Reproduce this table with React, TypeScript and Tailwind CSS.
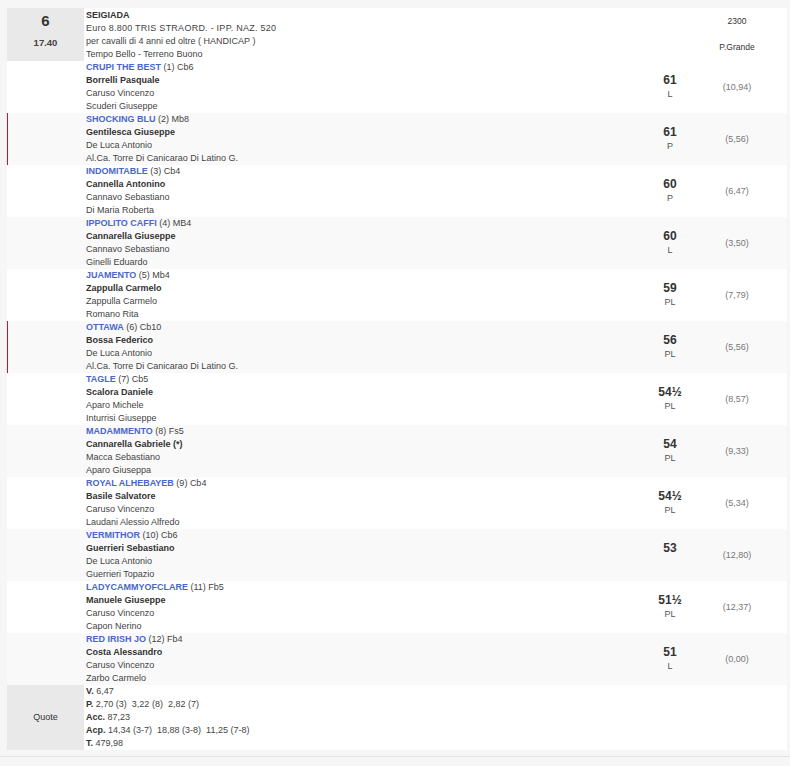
import React from "react";

type Horse = {
  name: string;
  num: number;
  code: string;
  jockey: string;
  trainer: string;
  owner: string;
  weight: string;
  tag: string;
  odds: string;
  red?: boolean;
};

const horses: Horse[] = [
  { name: "CRUPI THE BEST", num: 1, code: "Cb6", jockey: "Borrelli Pasquale", trainer: "Caruso Vincenzo", owner: "Scuderi Giuseppe", weight: "61", tag: "L", odds: "(10,94)" },
  { name: "SHOCKING BLU", num: 2, code: "Mb8", jockey: "Gentilesca Giuseppe", trainer: "De Luca Antonio", owner: "Al.Ca. Torre Di Canicarao Di Latino G.", weight: "61", tag: "P", odds: "(5,56)", red: true },
  { name: "INDOMITABLE", num: 3, code: "Cb4", jockey: "Cannella Antonino", trainer: "Cannavo Sebastiano", owner: "Di Maria Roberta", weight: "60", tag: "P", odds: "(6,47)" },
  { name: "IPPOLITO CAFFI", num: 4, code: "MB4", jockey: "Cannarella Giuseppe", trainer: "Cannavo Sebastiano", owner: "Ginelli Eduardo", weight: "60", tag: "L", odds: "(3,50)" },
  { name: "JUAMENTO", num: 5, code: "Mb4", jockey: "Zappulla Carmelo", trainer: "Zappulla Carmelo", owner: "Romano Rita", weight: "59", tag: "PL", odds: "(7,79)" },
  { name: "OTTAWA", num: 6, code: "Cb10", jockey: "Bossa Federico", trainer: "De Luca Antonio", owner: "Al.Ca. Torre Di Canicarao Di Latino G.", weight: "56", tag: "PL", odds: "(5,56)", red: true },
  { name: "TAGLE", num: 7, code: "Cb5", jockey: "Scalora Daniele", trainer: "Aparo Michele", owner: "Inturrisi Giuseppe", weight: "54½", tag: "PL", odds: "(8,57)" },
  { name: "MADAMMENTO", num: 8, code: "Fs5", jockey: "Cannarella Gabriele (*)", trainer: "Macca Sebastiano", owner: "Aparo Giuseppa", weight: "54", tag: "PL", odds: "(9,33)" },
  { name: "ROYAL ALHEBAYEB", num: 9, code: "Cb4", jockey: "Basile Salvatore", trainer: "Caruso Vincenzo", owner: "Laudani Alessio Alfredo", weight: "54½", tag: "PL", odds: "(5,34)" },
  { name: "VERMITHOR", num: 10, code: "Cb6", jockey: "Guerrieri Sebastiano", trainer: "De Luca Antonio", owner: "Guerrieri Topazio", weight: "53", tag: "", odds: "(12,80)" },
  { name: "LADYCAMMYOFCLARE", num: 11, code: "Fb5", jockey: "Manuele Giuseppe", trainer: "Caruso Vincenzo", owner: "Capon Nerino", weight: "51½", tag: "PL", odds: "(12,37)" },
  { name: "RED IRISH JO", num: 12, code: "Fb4", jockey: "Costa Alessandro", trainer: "Caruso Vincenzo", owner: "Zarbo Carmelo", weight: "51", tag: "L", odds: "(0,00)" },
];

export default function App() {
  return (
    <div
      className="min-h-[766px] w-[790px] bg-[#f6f6f6] pt-[8px] text-[9px] leading-[13px] text-[#444]"
      style={{ fontFamily: '"Liberation Sans", Arial, sans-serif' }}
    >
      <div className="ml-[7px] w-[780px] bg-white">
        {/* Header */}
        <div className="flex h-[53px]">
          <div className="flex w-[77px] flex-col items-center bg-[#e9e9e9]">
            <div className="mt-[4px] text-[15px] font-bold leading-[18px] text-[#333]">6</div>
            <div className="mt-[6px] text-[9.5px] font-bold text-[#444]">17.40</div>
          </div>
          <div className="flex-1 pl-[2px] pt-px">
            <div className="font-bold text-[#333]">SEIGIADA</div>
            <div className="tracking-[0.25px]">Euro 8.800 TRIS STRAORD. - IPP. NAZ. 520</div>
            <div>per cavalli di 4 anni ed oltre ( HANDICAP )</div>
            <div>Tempo Bello - Terreno Buono</div>
          </div>
          <div className="w-[60px]" />
          <div className="flex w-[74px] flex-col items-center pt-[7px] text-[#333]">
            <div className="text-[8.5px]">2300</div>
            <div className="mt-[13px] text-[8.5px]">P.Grande</div>
          </div>
          <div className="w-[13px]" />
        </div>

        {horses.map((h, i) => (
          <div
            key={h.num}
            className={"flex h-[52px] " + (i % 2 === 1 ? "bg-[#f9f9f9]" : "bg-white")}
          >
            <div className={h.red ? "w-px bg-[#d0101e]" : "w-px"} />
            <div className="w-[76px]" />
            <div className="flex-1 pl-[2px]">
              <div>
                <span className="font-bold text-[#4a66cc]">{h.name}</span>
                <span> ({h.num}) {h.code}</span>
              </div>
              <div className="font-bold text-[#333]">{h.jockey}</div>
              <div>{h.trainer}</div>
              <div>{h.owner}</div>
            </div>
            <div className="flex w-[60px] flex-col items-center justify-center">
              <div className="text-[12px] font-bold leading-[15px] text-[#333]">{h.weight}</div>
              <div className="h-[13px] text-[9px] text-[#555]">{h.tag}</div>
            </div>
            <div className="flex w-[74px] items-center justify-center text-[#777]">{h.odds}</div>
            <div className="w-[13px]" />
          </div>
        ))}

        {/* Quote */}
        <div className="flex h-[65px]">
          <div className="flex w-[77px] items-center justify-center bg-[#e9e9e9] text-[#333]">Quote</div>
          <div className="flex-1 pl-[2px]">
            <div><b className="text-[#333]">V.</b> 6,47</div>
            <div><b className="text-[#333]">P.</b> 2,70 (3)&nbsp; 3,22 (8)&nbsp; 2,82 (7)</div>
            <div><b className="text-[#333]">Acc.</b> 87,23</div>
            <div><b className="text-[#333]">Acp.</b> 14,34 (3-7)&nbsp; 18,88 (3-8)&nbsp; 11,25 (7-8)</div>
            <div><b className="text-[#333]">T.</b> 479,98</div>
          </div>
        </div>
      </div>
      <div className="mt-[6px] h-px w-full bg-[#e4e4e4]" />
    </div>
  );
}
